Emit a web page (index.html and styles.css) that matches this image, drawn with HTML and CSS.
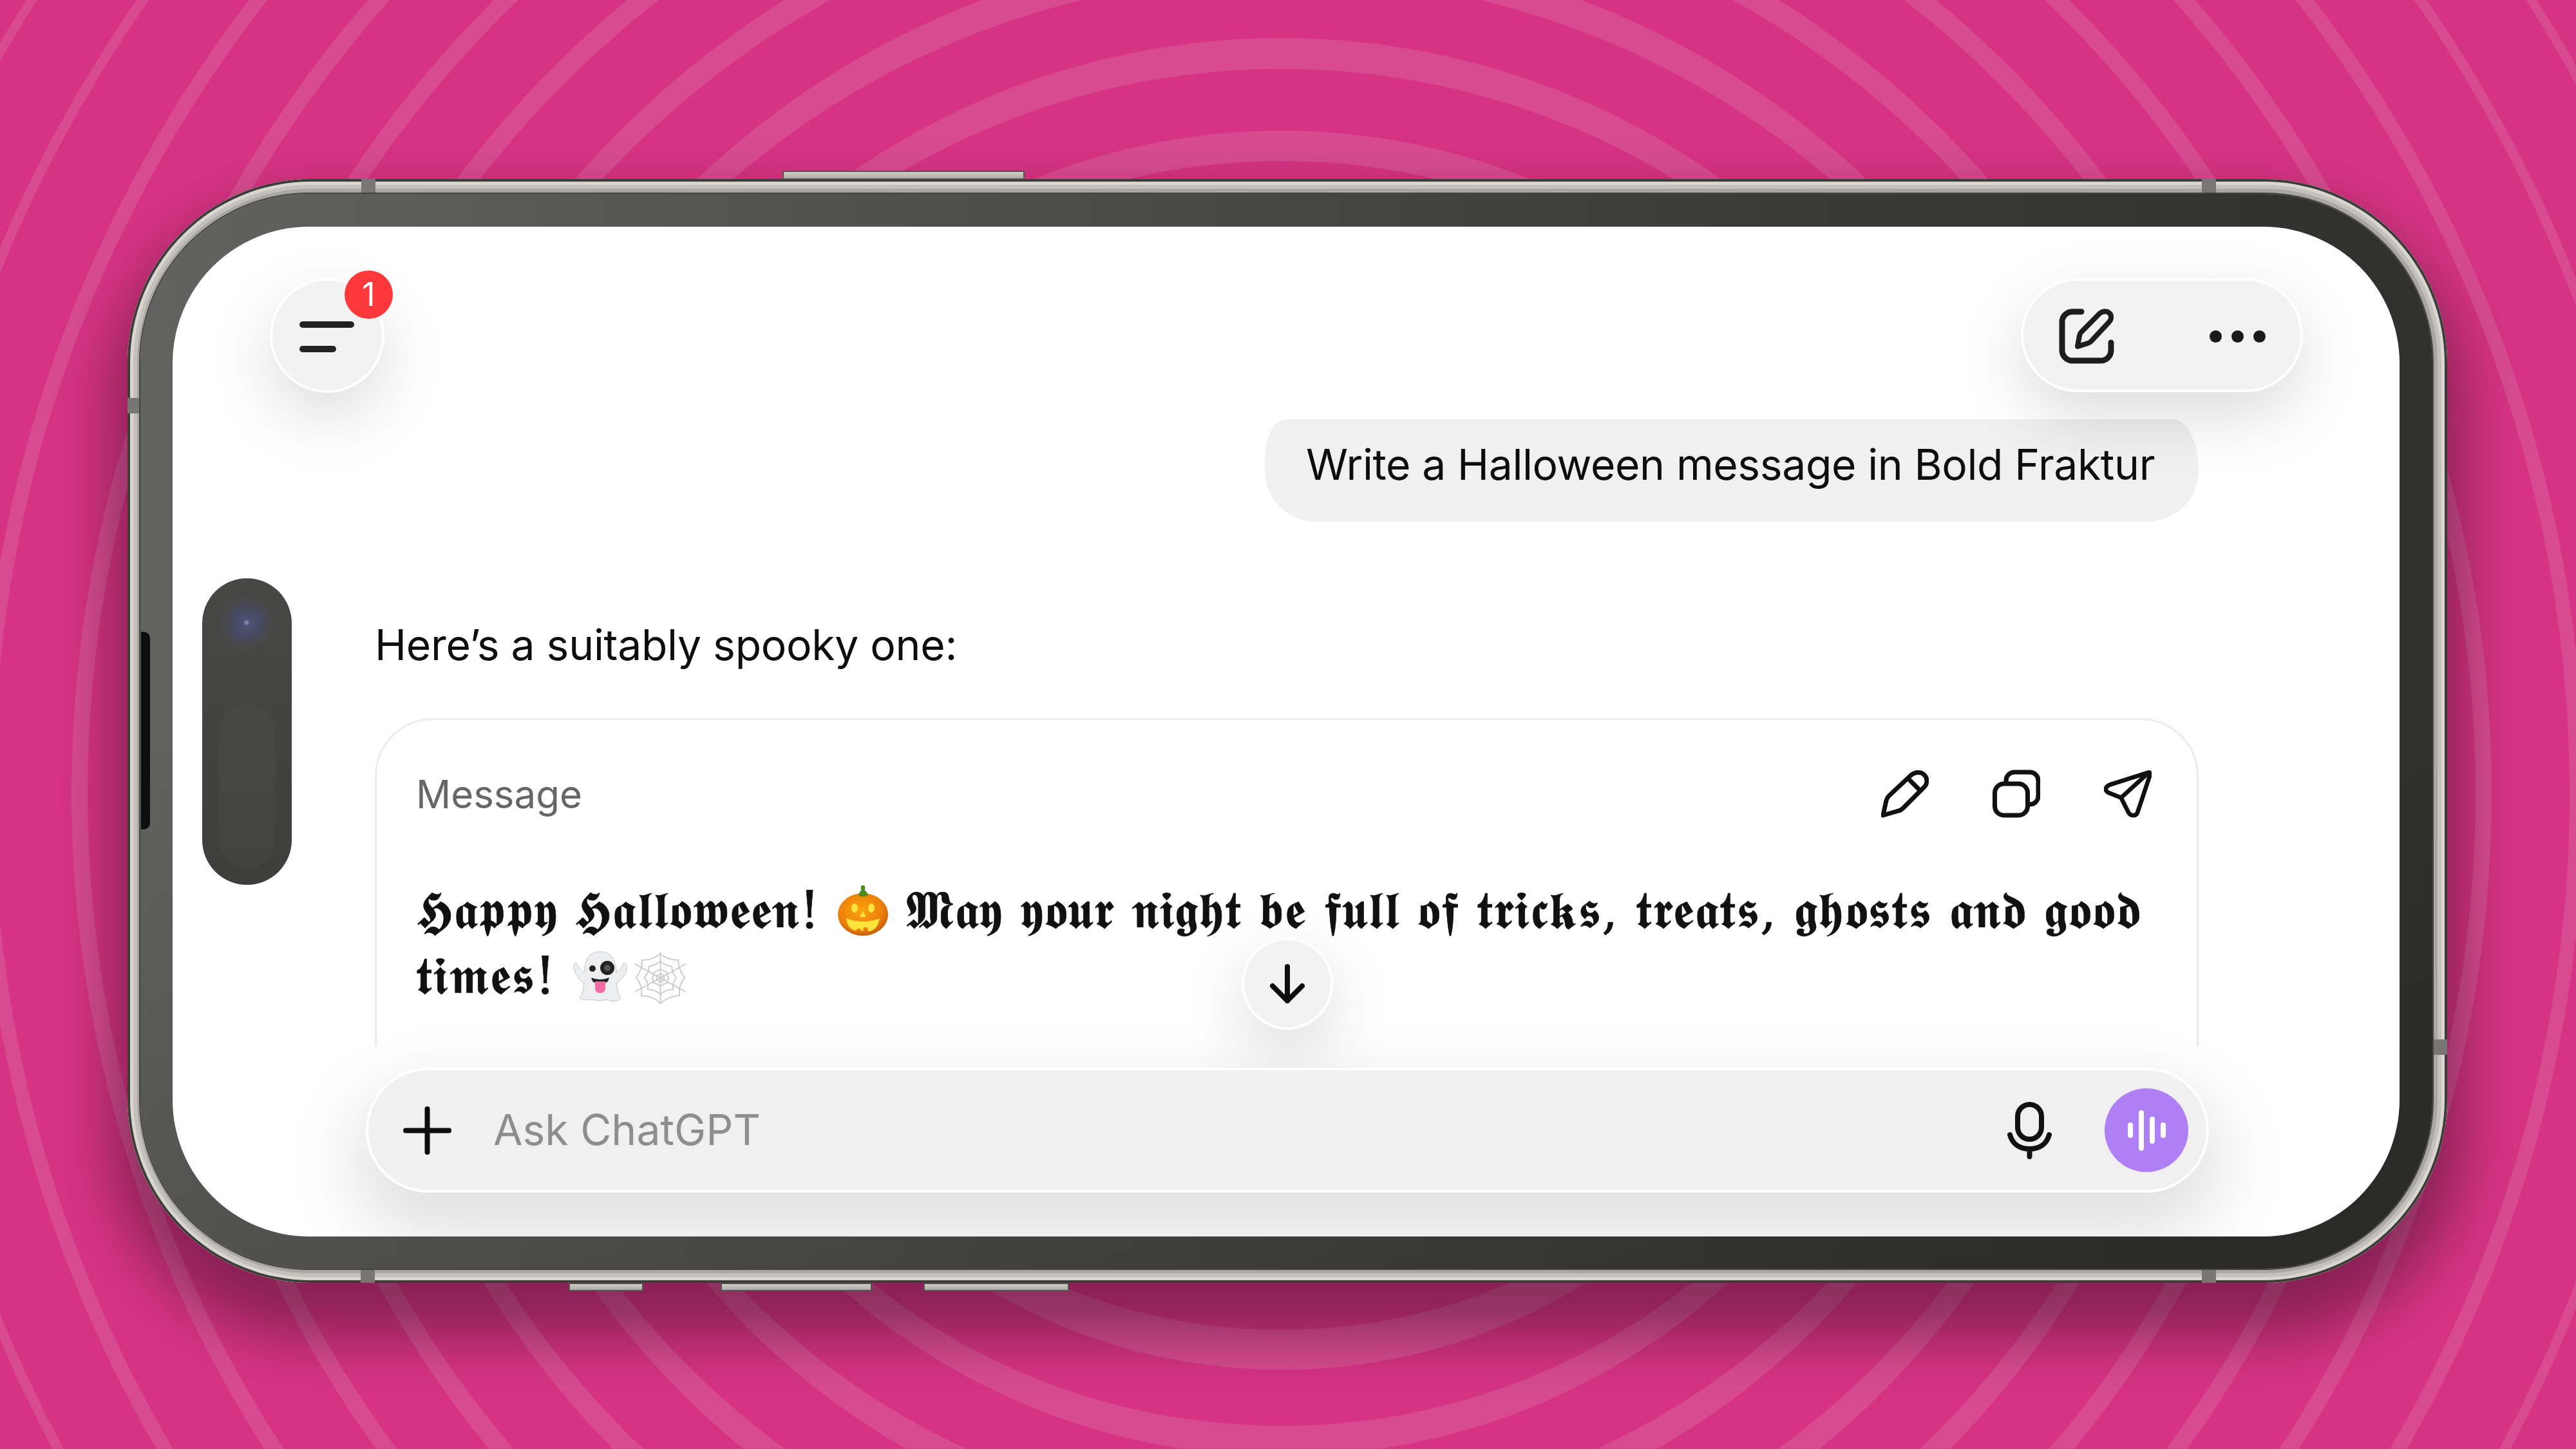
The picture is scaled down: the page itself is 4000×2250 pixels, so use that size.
FILE: index.html
```html
<!DOCTYPE html>
<html lang="en">

<head>
    <meta charset="UTF-8">
    <title>Bold Fraktur message</title>
    <link rel="stylesheet" href="styles.css">
</head>

<body>
    <div class="stage">
        <!-- Backdrop rings, painted from the outside in -->
        <svg class="rings" viewBox="0 0 4000 2250">
            <g transform="translate(1990 1232)">
                <circle class="ring" r="2306"/><ellipse class="gap" rx="2292" ry="2291"/>
                <circle class="ring" r="2163"/><ellipse class="gap" rx="2148" ry="2146"/>
                <circle class="ring" r="2022"/><ellipse class="gap" rx="2000" ry="1998"/>
                <circle class="ring" r="1879"/><ellipse class="gap" rx="1854" ry="1853"/>
                <circle class="ring" r="1736"/><ellipse class="gap" rx="1711" ry="1708"/>
                <circle class="ring" r="1597"/><ellipse class="gap" rx="1571" ry="1563"/>
                <circle class="ring" r="1454"/><ellipse class="gap" rx="1428" ry="1414"/>
                <circle class="ring" r="1317"/><ellipse class="gap" rx="1291" ry="1269"/>
                <circle class="ring" r="1173"/><ellipse class="gap" rx="1149" ry="1125"/>
                <circle class="ring" r="1029"/><ellipse class="gap" rx="1005" ry="982"/>
                <circle class="ring" r="895"/><ellipse class="gap" rx="865" ry="833"/>
            </g>
        </svg>
        <div class="phone">
            <span class="side-key key-top"></span>
            <span class="side-key key-b1"></span>
            <span class="side-key key-b2"></span>
            <span class="side-key key-b3"></span>
            <span class="band band-t1"></span>
            <span class="band band-t2"></span>
            <span class="band band-b1"></span>
            <span class="band band-b2"></span>
            <span class="band band-l1"></span>
            <span class="band band-r1"></span>
            <div class="bezel">
                <span class="speaker-slot"></span>
                <div class="screen">
                    <div class="camera">
                        <span class="lens"></span>
                        <span class="sensor"></span>
                    </div>

                    <header class="topbar">
                        <button class="menu-btn">
                            <span class="line-long"></span>
                            <span class="line-short"></span>
                            <span class="badge">1</span>
                        </button>
                        <div class="top-actions">
                            <svg class="icon-compose" viewBox="0 0 86 86" fill="none" stroke="#1d1d1d" stroke-width="9" stroke-linecap="round" stroke-linejoin="round">
                                <path d="M35 5H21A16 16 0 0 0 5 21V65A16 16 0 0 0 21 81H65A16 16 0 0 0 81 65V53"/>
                                <path stroke-width="8" d="M29 59L32 42Q32.500 39 34.500 37L63 8Q69 3 75 5Q82 8 81 15Q80.500 18 78 21L50 51Q48 53 45 54Z"/>
                            </svg>
                            <div class="dots"><span></span><span></span><span></span></div>
                        </div>
                    </header>

                    <div class="thread">
                        <div class="user-row">
                            <div class="bubble">Write a Halloween message in Bold Fraktur</div>
                        </div>
                        <p class="intro">Here’s a suitably spooky one:</p>
                        <div class="card">
                            <div class="card-head">
                                <span class="card-title">Message</span>
                                <div class="card-tools">
                                    <svg class="tool" viewBox="0 0 74 74" fill="none" stroke="#111" stroke-width="7" stroke-linecap="round" stroke-linejoin="round">
                                        <path d="M3 71L8 48Q9 44 12 41L46 9Q53 3 62 5Q70 8 71 17Q71 23 67 27L34 60Q31 63 27 64Z"/>
                                        <path d="M43 15L58 30"/>
                                    </svg>
                                    <svg class="tool" viewBox="0 0 74 74" fill="none" stroke="#111" stroke-width="7" stroke-linecap="round" stroke-linejoin="round">
                                        <rect x="3.500" y="22" width="51" height="49" rx="14"/>
                                        <path d="M21 20V17A13 13 0 0 1 34 4H58A13 13 0 0 1 71 17V41A13 13 0 0 1 58 54H55"/>
                                    </svg>
                                    <svg class="tool" viewBox="0 0 78 78" fill="none" stroke="#111" stroke-width="7" stroke-linecap="round" stroke-linejoin="round">
                                        <path d="M72 5L12 24Q3 27 3 32Q3 36 8 38L28 46L39 68Q42 75 48 75Q53 75 55 70L75 10Q77 3 72 5Z"/>
                                        <path d="M28 46L72 6"/>
                                    </svg>
                                </div>
                            </div>
                            <p class="fraktur">𝕳𝖆𝖕𝖕𝖞 𝕳𝖆𝖑𝖑𝖔𝖜𝖊𝖊𝖓! <svg class="emoji" viewBox="0 0 80 80" role="img" aria-label="pumpkin">
                                    <defs>
                                        <radialGradient id="pumpkinFill" cx="0.45" cy="0.4" r="0.65">
                                            <stop offset="0" stop-color="#f9a30f"/>
                                            <stop offset="0.7" stop-color="#ec7f0c"/>
                                            <stop offset="1" stop-color="#b9530a"/>
                                        </radialGradient>
                                    </defs>
                                    <ellipse cx="40" cy="46" rx="39" ry="33" fill="url(#pumpkinFill)"/>
                                    <path d="M33 15Q40 11 47 15" fill="none" stroke="#b9600c" stroke-width="2"/>
                                    <path d="M33 16Q35 10 37 9L37 2Q40 -1 43 2L43 9Q46 10 48 16Q40 21 33 16Z" fill="#4d8a1e"/>
                                    <ellipse cx="27" cy="36" rx="5" ry="7" fill="#ffe23a"/>
                                    <ellipse cx="53" cy="36" rx="5" ry="7" fill="#ffe23a"/>
                                    <path d="M40 40L45 50H35Z" fill="#ffe23a"/>
                                    <path d="M14 52Q40 62 66 52Q62 72 48 72L47 66L41 66L40 73L34 67L28 71Q16 68 14 52Z" fill="#ffe23a"/>
                                </svg> 𝕸𝖆𝖞 𝖞𝖔𝖚𝖗 𝖓𝖎𝖌𝖍𝖙 𝖇𝖊 𝖋𝖚𝖑𝖑 𝖔𝖋 𝖙𝖗𝖎𝖈𝖐𝖘, 𝖙𝖗𝖊𝖆𝖙𝖘, 𝖌𝖍𝖔𝖘𝖙𝖘 𝖆𝖓𝖉 𝖌𝖔𝖔𝖉 𝖙𝖎𝖒𝖊𝖘! <svg class="emoji ghost" viewBox="0 0 84 80" role="img" aria-label="ghost">
                                    <path d="M42 2C22 2 18 18 17 34C16 34 10 30 6 20C1 18 0 24 2 30C5 40 11 48 17 50C16 60 14 68 10 74C18 80 28 74 34 77C42 80 50 74 58 78C66 80 74 76 74 74C70 68 68 60 67 50C73 48 80 40 83 30C84 24 82 18 78 20C74 30 68 34 67 34C66 18 62 2 42 2Z" fill="#eceef0" stroke="#c4c6ca" stroke-width="1"/>
                                    <circle cx="30" cy="28" r="5" fill="#222"/>
                                    <circle cx="53" cy="27" r="11" fill="#222"/>
                                    <circle cx="53" cy="27" r="5" fill="#555"/>
                                    <path d="M28 42Q42 48 56 42Q54 50 50 50H34Q30 50 28 42Z" fill="#222"/>
                                    <path d="M34 48H50V58Q50 66 42 66Q34 66 34 58Z" fill="#f06aa6"/>
                                </svg><svg class="emoji web" viewBox="0 0 84 84" role="img" aria-label="spider web" fill="none" stroke="#c9c9c9" stroke-width="1.800">
                                    <path d="M42 1V83M2 20L82 64M2 64L82 20"/>
                                    <path d="M42 4Q52 14 70 14Q70 28 80 42Q70 54 72 70Q56 70 42 82Q30 70 12 70Q14 54 4 42Q14 28 13 14Q30 14 42 4Z"/>
                                    <path d="M42 16Q49 22 60 24Q60 33 67 42Q60 50 62 60Q50 60 42 68Q34 60 22 60Q24 50 17 42Q24 33 24 24Q34 22 42 16Z"/>
                                    <path d="M42 28Q47 31 52 33Q52 38 55 42Q52 46 53 50Q47 51 42 55Q37 51 31 50Q32 46 29 42Q32 38 32 33Q37 31 42 28Z"/>
                                    <circle cx="42" cy="42" r="6"/>
                                </svg></p>
                        </div>
                    </div>

                    <button class="down-btn">
                        <svg viewBox="0 0 54 62" fill="none" stroke="#0d0d0d" stroke-width="8" stroke-linecap="round" stroke-linejoin="round">
                            <path d="M27 4V57M4 34L27 57L50 34"/>
                        </svg>
                    </button>

                    <div class="composer">
                        <svg class="icon-plus" viewBox="0 0 75 75" fill="none" stroke="#0d0d0d" stroke-width="8" stroke-linecap="round">
                            <path d="M37.500 4V71M4 37.500H71"/>
                        </svg>
                        <span class="placeholder">Ask ChatGPT</span>
                        <svg class="icon-mic" viewBox="0 0 69 89" fill="none" stroke="#111" stroke-width="8" stroke-linecap="round">
                            <rect x="16" y="4" width="37" height="54" rx="18.500"/>
                            <path d="M4 51C8 66 20 73 34.500 73C49 73 61 66 65 51M34.500 73V85"/>
                        </svg>
                        <div class="voice-btn">
                            <span class="bar-a"></span>
                            <span class="bar-b"></span>
                            <span class="bar-c"></span>
                            <span class="bar-d"></span>
                        </div>
                    </div>
                </div>
            </div>
        </div>
    </div>
</body>

</html>
```
FILE: styles.css
```css
body {
    margin: 0;
    width: 4000px;
    height: 2250px;
    overflow: hidden;
    font-family: Inter, "Noto Sans", sans-serif;
}

/* Pink backdrop */
.stage {
    position: relative;
    box-sizing: border-box;
    width: 4000px;
    height: 2250px;
    padding: 278px 200px 258px 198px;
    background: #d63384;
}

.rings {
    position: absolute;
    left: 0;
    top: 0;
    width: 4000px;
    height: 2250px;
}

.ring {
    fill: #d84b91;
}

.gap {
    fill: #d63384;
}

/* Steel frame */
.phone {
    position: relative;
    box-sizing: border-box;
    height: 1714px;
    padding: 23px 23px 22px 20px;
    border-radius: 285px;
    background: #aaa7a2;
    box-shadow: inset 0 0 0 4px #3e3c38, inset 0 0 0 9px #d9d6d1, inset 0 0 0 15px #c4c1bc,
        0 60px 90px 24px rgba(0, 0, 0, 0.36);
}

.side-key {
    position: absolute;
    background: linear-gradient(to bottom, #d8d5d1, #a6a39f);
    box-shadow: inset 0 0 0 2px #55534f;
}

.key-top {
    left: 1017px;
    top: -13px;
    width: 376px;
    height: 14px;
}

.key-b1 {
    left: 685px;
    bottom: -13px;
    width: 116px;
    height: 13px;
}

.key-b2 {
    left: 921px;
    bottom: -13px;
    width: 235px;
    height: 13px;
}

.key-b3 {
    left: 1236px;
    bottom: -13px;
    width: 226px;
    height: 13px;
}

.band {
    position: absolute;
    background: #787674;
}

.band-t1,
.band-t2,
.band-b1,
.band-b2 {
    width: 22px;
    height: 23px;
}

.band-t1 {
    left: 363px;
    top: 0;
}

.band-t2 {
    left: 3221px;
    top: 0;
}

.band-b1 {
    left: 362px;
    bottom: 0;
}

.band-b2 {
    left: 3221px;
    bottom: 0;
}

.band-l1,
.band-r1 {
    width: 22px;
    height: 24px;
}

.band-l1 {
    left: 0;
    top: 340px;
}

.band-r1 {
    right: 0;
    top: 1336px;
}

.bezel {
    position: relative;
    box-sizing: border-box;
    height: 100%;
    padding: 51px 51px 50px 50px;
    border-radius: 262px;
    background: linear-gradient(to bottom, transparent 50%, rgba(0, 0, 0, 0.16)),
        linear-gradient(to right, #626260, #383836 75%, #30302e);
    box-shadow: 0 0 0 2px #45443f;
}

.speaker-slot {
    position: absolute;
    left: 1px;
    top: 680px;
    width: 14px;
    height: 307px;
    border-radius: 0 10px 10px 0;
    background: #0e0e0e;
}

/* The screen, a landscape chat */
.screen {
    position: relative;
    box-sizing: border-box;
    height: 100%;
    padding: 80px 312px 0 314px;
    border-radius: 212px;
    background: #fff;
    overflow: hidden;
    color: #0d0d0d;
}

.camera {
    position: absolute;
    left: 46px;
    top: 546px;
    width: 139px;
    height: 476px;
    border-radius: 70px;
    background: linear-gradient(to bottom, #474746, #3e3e3d);
}

.lens {
    position: absolute;
    left: 27px;
    top: 27px;
    width: 84px;
    height: 84px;
    border-radius: 50%;
    background: radial-gradient(circle, #8f9bc9 0, #4c5272 9%, #464a60 38%, #484848 62%);
}

.sensor {
    position: absolute;
    left: 26px;
    top: 196px;
    width: 88px;
    height: 253px;
    border-radius: 44px;
    background: rgba(255, 255, 255, 0.025);
}

/* Top buttons */
.topbar {
    position: relative;
    z-index: 2;
    display: flex;
    justify-content: space-between;
    margin: 0 -162px 0 -163px;
}

.menu-btn,
.top-actions,
.down-btn {
    box-sizing: border-box;
    border: 4px solid #fff;
    background: #f2f2f2;
    box-shadow: 0 36px 100px rgba(0, 0, 0, 0.14);
}

.menu-btn {
    position: relative;
    width: 178px;
    height: 178px;
    padding: 0;
    border-radius: 50%;
}

.line-long,
.line-short {
    position: absolute;
    left: 42px;
    height: 10px;
    border-radius: 5px;
    background: #222;
}

.line-long {
    top: 63px;
    width: 85px;
}

.line-short {
    top: 101px;
    width: 57px;
}

.badge {
    position: absolute;
    left: 112px;
    top: -16px;
    width: 75px;
    height: 75px;
    border-radius: 50%;
    background: #ff383c;
    color: #fff;
    font-family: Inter, sans-serif;
    font-size: 50px;
    line-height: 75px;
    text-align: center;
}

.top-actions {
    display: flex;
    align-items: center;
    gap: 148px;
    width: 438px;
    height: 177px;
    padding-left: 55px;
    border-radius: 89px;
}

.icon-compose {
    width: 86px;
    height: 86px;
    margin-top: 3px;
}

.dots {
    display: flex;
    gap: 15px;
    margin-top: 3px;
}

.dots span {
    width: 19px;
    height: 19px;
    border-radius: 50%;
    background: #1a1a1a;
}

/* Messages */
.thread {
    display: flex;
    flex-direction: column;
}

.user-row {
    display: flex;
    justify-content: flex-end;
    margin-top: 41px;
}

.bubble {
    box-sizing: border-box;
    width: 1450px;
    height: 159px;
    padding-left: 64px;
    border-radius: 34px 40px 80px 80px / 60px 80px 80px 80px;
    background: #f0f0f0;
    font-size: 66px;
    letter-spacing: -0.4px;
    line-height: 141px;
    white-space: nowrap;
}

.intro {
    margin: 143px 0 0;
    font-size: 66px;
    letter-spacing: -0.3px;
    line-height: 96px;
}

.card {
    box-sizing: border-box;
    height: 510px;
    margin-top: 66px;
    padding: 0 61px;
    border: solid #ececec;
    border-width: 3px 3px 0;
    border-radius: 90px 90px 0 0;
}

.card-head {
    display: flex;
    justify-content: space-between;
    align-items: center;
    height: 230px;
}

.card-title {
    color: #666;
    font-size: 60px;
}

.card-tools {
    display: flex;
    gap: 99px;
    margin: 0 9px 3px 0;
}

.tool {
    width: 74px;
    height: 76px;
}

.fraktur {
    margin: 15px 0 0;
    color: #111;
    font-family: "DejaVu Serif", "DejaVu Sans", serif;
    font-size: 80px;
    letter-spacing: 0.9px;
    line-height: 102px;
    -webkit-text-stroke: 0.7px #111;
}

.emoji {
    width: 80px;
    height: 80px;
    vertical-align: -13px;
}

.ghost {
    width: 84px;
}

.web {
    width: 83px;
    height: 83px;
    margin-left: 10px;
    vertical-align: -17px;
}

/* Scroll to bottom */
.down-btn {
    position: absolute;
    left: 1660px;
    top: 1104px;
    width: 142px;
    height: 143px;
    padding: 0;
    border-radius: 50%;
}

.down-btn svg {
    display: block;
    width: 54px;
    height: 62px;
    margin: 0 auto;
}

/* Input bar */
.composer {
    position: relative;
    display: flex;
    align-items: center;
    box-sizing: border-box;
    height: 194px;
    margin: 33px -16px 0 -14px;
    padding-left: 54px;
    border: 4px solid #fff;
    border-radius: 97px;
    background: #f0f0f0;
    box-shadow: 0 50px 110px 20px rgba(0, 0, 0, 0.12);
}

.icon-plus {
    width: 75px;
    height: 75px;
}

.placeholder {
    margin: 0 0 3px 65px;
    flex: 1;
    color: #8e8e8e;
    font-size: 66px;
}

.icon-mic {
    width: 69px;
    height: 89px;
}

.voice-btn {
    display: flex;
    align-items: center;
    justify-content: center;
    gap: 9px;
    width: 130px;
    height: 130px;
    margin: 0 28px 0 82px;
    border-radius: 50%;
    background: #ae7ff5;
}

.voice-btn span {
    width: 8px;
    border-radius: 4px;
    background: #fff;
}

.bar-a,
.bar-d {
    height: 24px;
}

.bar-b {
    height: 63px;
}

.bar-c {
    height: 42px;
}
```
